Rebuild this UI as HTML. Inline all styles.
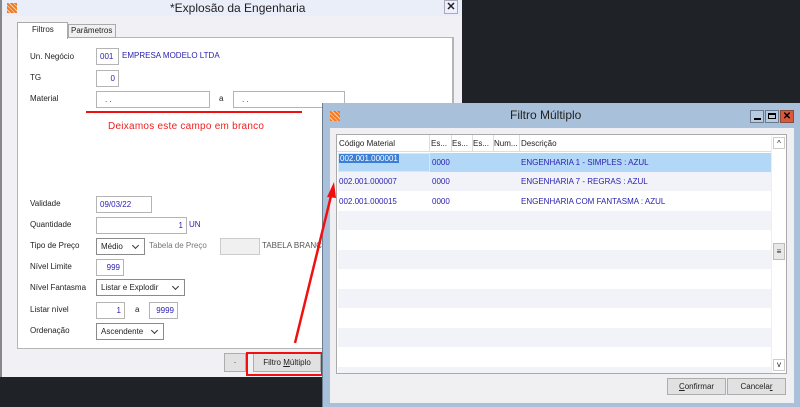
<!DOCTYPE html><html><head><meta charset="utf-8"><style>
*{margin:0;padding:0;box-sizing:border-box}
body{width:800px;height:407px;overflow:hidden;background:#1f2226;font-family:"Liberation Sans",sans-serif;font-size:8px;color:#222;position:relative}
.a{position:absolute;white-space:nowrap}
.in{position:absolute;background:#fff;border:1px solid #b4b4b4;color:#2b22b0;padding:0 3px;line-height:15px;height:17px}
.r{text-align:right}
.sel{position:absolute;background:#fff;border:1px solid #8a8a8a;color:#222;padding:0 4px;line-height:15px;height:17px}
.sel:after{content:"";position:absolute;right:6px;top:4px;width:4px;height:4px;border-right:1px solid #333;border-bottom:1px solid #333;transform:rotate(45deg)}
.btn{position:absolute;background:#e1e1e1;border:1px solid #adadad;text-align:center;line-height:17px}
.ico{position:absolute;width:10px;height:10px;background:repeating-linear-gradient(45deg,#f07a2a 0 2px,#ffd0a0 2px 3px)}
.blue{color:#2b22b0}
</style></head><body>
<div class="a" style="left:0;top:0;width:462px;height:377px;background:#f0f0f5;border-left:2px solid #888"></div>
<div class="a" style="left:2px;top:0;width:460px;height:16px;background:#e9eef9"></div>
<div class="ico" style="left:7px;top:3px"></div>
<div class="a" style="left:170px;top:1px;font-size:12px;color:#222">*Explosão da Engenharia</div>
<div class="a" style="left:444px;top:0;width:14px;height:14px;border:1px solid #aab;background:#eef;font-size:11px;font-weight:bold;text-align:center;line-height:12px">✕</div>
<div class="a" style="left:17px;top:37px;width:437px;height:312px;background:#fff;border:1px solid #b5b5b5;border-right-width:2px"></div>
<div class="a" style="left:68px;top:24px;width:48px;height:14px;background:#f0f0f0;border:1px solid #aaa;padding-left:2px;line-height:12px">Parâmetros</div>
<div class="a" style="left:17px;top:22px;width:51px;height:17px;background:#fff;border:1px solid #aaa;border-bottom:none;padding-left:14px;line-height:13px">Filtros</div>
<div class="a" style="left:30px;top:52px">Un. Negócio</div>
<div class="in" style="left:96px;top:48px;width:23px">001</div>
<div class="a blue" style="left:122px;top:51px">EMPRESA MODELO LTDA</div>
<div class="a" style="left:30px;top:73px">TG</div>
<div class="in r" style="left:96px;top:70px;width:23px">0</div>
<div class="a" style="left:30px;top:94px">Material</div>
<div class="in" style="left:96px;top:91px;width:114px;padding-left:8px">. .</div>
<div class="a" style="left:219px;top:94px">a</div>
<div class="in" style="left:233px;top:91px;width:112px;padding-left:8px">. .</div>
<div class="a" style="left:86px;top:111px;width:216px;height:2px;background:#f01010"></div>
<div class="a" style="left:108px;top:121px;font-size:10px;color:#f02020;letter-spacing:.25px">Deixamos este campo em branco</div>
<div class="a" style="left:30px;top:199px">Validade</div>
<div class="in" style="left:96px;top:196px;width:56px">09/03/22</div>
<div class="a" style="left:30px;top:220px">Quantidade</div>
<div class="in r" style="left:96px;top:217px;width:91px">1</div>
<div class="a blue" style="left:189px;top:220px">UN</div>
<div class="a" style="left:30px;top:241px">Tipo de Preço</div>
<div class="sel" style="left:96px;top:238px;width:49px">Médio</div>
<div class="a" style="left:149px;top:241px;color:#777">Tabela de Preço</div>
<div class="a" style="left:220px;top:238px;width:40px;height:17px;background:#f0f0f0;border:1px solid #ccc"></div>
<div class="a" style="left:262px;top:241px;color:#555">TABELA BRANCA</div>
<div class="a" style="left:30px;top:262px">Nível Limite</div>
<div class="in r" style="left:96px;top:259px;width:28px">999</div>
<div class="a" style="left:30px;top:283px">Nível Fantasma</div>
<div class="sel" style="left:96px;top:279px;width:89px">Listar e Explodir</div>
<div class="a" style="left:30px;top:305px">Listar nível</div>
<div class="in r" style="left:96px;top:302px;width:29px">1</div>
<div class="a" style="left:135px;top:305px">a</div>
<div class="in r" style="left:149px;top:302px;width:29px">9999</div>
<div class="a" style="left:30px;top:326px">Ordenação</div>
<div class="sel" style="left:96px;top:323px;width:68px">Ascendente</div>
<div class="btn" style="left:224px;top:353px;width:22px;height:19px">·</div>
<div class="btn" style="left:253px;top:353px;width:68px;height:19px">Filtro <u>M</u>últiplo</div>
<div class="a" style="left:246px;top:352px;width:77px;height:24px;border:2px solid #f01010"></div>
<div class="a" style="left:322px;top:103px;width:478px;height:304px;background:#a9c0da;border-left:1px solid #6d7d90"></div>
<div class="ico" style="left:330px;top:111px"></div>
<div class="a" style="left:510px;top:108px;font-size:12px;color:#222">Filtro Múltiplo</div>
<div class="a" style="left:750px;top:110px;width:14px;height:13px;border:1px solid #6a7a8e;background:#b9cbe0"><div style="position:absolute;left:3px;top:7px;width:7px;height:2px;background:#000"></div></div>
<div class="a" style="left:765px;top:110px;width:14px;height:13px;border:1px solid #6a7a8e;background:#b9cbe0"><div style="position:absolute;left:2px;top:2px;width:8px;height:6px;border:1px solid #000;border-top-width:2px"></div></div>
<div class="a" style="left:780px;top:110px;width:14px;height:13px;border:1px solid #8a4a3a;background:#d9593e;color:#000;font-weight:bold;font-size:10px;text-align:center;line-height:12px">✕</div>
<div class="a" style="left:330px;top:128px;width:464px;height:275px;background:#f0f0f2"></div>
<div class="a" style="left:336px;top:134px;width:451px;height:240px;background:#fff;border:1px solid #aaa"></div>
<div class="a" style="left:337px;top:135px;width:434px;height:17px;background:#fff;border-bottom:1px solid #ddd"></div>
<div class="a" style="left:339px;top:139px">Código Material</div>
<div class="a" style="left:431px;top:139px">Es...</div>
<div class="a" style="left:452px;top:139px">Es...</div>
<div class="a" style="left:473px;top:139px">Es...</div>
<div class="a" style="left:494px;top:139px">Num...</div>
<div class="a" style="left:521px;top:139px">Descrição</div>
<div class="a" style="left:429px;top:135px;width:1px;height:17px;background:#ddd"></div>
<div class="a" style="left:451px;top:135px;width:1px;height:17px;background:#ddd"></div>
<div class="a" style="left:472px;top:135px;width:1px;height:17px;background:#ddd"></div>
<div class="a" style="left:493px;top:135px;width:1px;height:17px;background:#ddd"></div>
<div class="a" style="left:519px;top:135px;width:1px;height:17px;background:#ddd"></div>
<div class="a" style="left:338px;top:153px;width:433px;height:19px;background:#b3d7f7"></div>
<div class="a" style="left:338px;top:153px;width:92px;height:19px;border:1px solid #d5e8fa"></div>
<div class="a" style="left:339px;top:154px;color:#fff;background:#3b7fd6;padding:0 1px">002.001.000001</div>
<div class="a blue" style="left:432px;top:158px">0000</div>
<div class="a blue" style="left:521px;top:158px">ENGENHARIA 1 - SIMPLES : AZUL</div>
<div class="a" style="left:338px;top:172px;width:433px;height:19px;background:#f2f3f8"></div>
<div class="a blue" style="left:339px;top:177px">002.001.000007</div>
<div class="a blue" style="left:432px;top:177px">0000</div>
<div class="a blue" style="left:521px;top:177px">ENGENHARIA 7 - REGRAS : AZUL</div>
<div class="a blue" style="left:339px;top:197px">002.001.000015</div>
<div class="a blue" style="left:432px;top:197px">0000</div>
<div class="a blue" style="left:521px;top:197px">ENGENHARIA COM FANTASMA : AZUL</div>
<div class="a" style="left:338px;top:211px;width:433px;height:19px;background:#f2f3f8"></div>
<div class="a" style="left:338px;top:250px;width:433px;height:19px;background:#f2f3f8"></div>
<div class="a" style="left:338px;top:289px;width:433px;height:19px;background:#f2f3f8"></div>
<div class="a" style="left:338px;top:328px;width:433px;height:19px;background:#f2f3f8"></div>
<div class="a" style="left:338px;top:367px;width:433px;height:6px;background:#f2f3f8"></div>
<div class="a" style="left:771px;top:135px;width:15px;height:238px;background:#fff;border-left:1px solid #eee"></div>
<div class="a" style="left:773px;top:137px;width:12px;height:12px;border:1px solid #ccc;text-align:center;font-size:8px;line-height:12px">^</div>
<div class="a" style="left:773px;top:243px;width:12px;height:17px;border:1px solid #bbb;background:#e8e8e8;text-align:center;font-size:8px;line-height:15px">≡</div>
<div class="a" style="left:773px;top:359px;width:12px;height:12px;border:1px solid #ccc;text-align:center;font-size:8px;line-height:10px">v</div>
<div class="btn" style="left:667px;top:378px;width:59px;height:17px;line-height:15px"><u>C</u>onfirmar</div>
<div class="btn" style="left:727px;top:378px;width:59px;height:17px;line-height:15px">Cancela<u>r</u></div>
<svg class="a" style="left:0;top:0" width="800" height="407"><line x1="295" y1="343" x2="331" y2="196" stroke="#f01010" stroke-width="2.5"/><polygon points="334,182 327,197 336,198" fill="#f01010"/></svg>
</body></html>
